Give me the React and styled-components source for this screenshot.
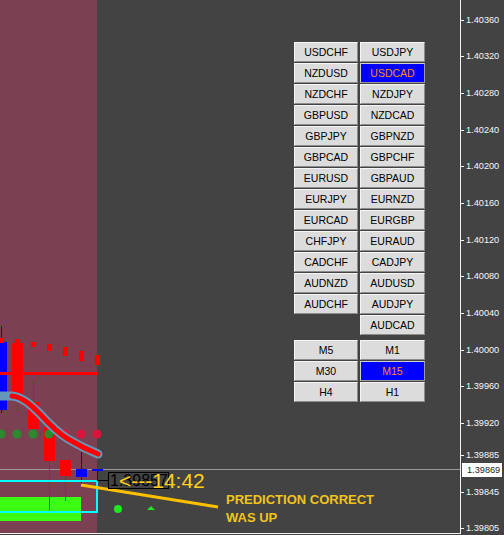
import styled, { createGlobalStyle } from "styled-components";

const GlobalStyle = createGlobalStyle`
  html, body {
    margin: 0;
    padding: 0;
    background: #434343;
  }
  body {
    font-family: "Liberation Sans", Arial, sans-serif;
  }
`;

const Screen = styled.div`
  display: flex;
  width: 504px;
  height: 535px;
  background: #434343;
  overflow: hidden;
`;

const Chart = styled.div`
  position: relative;
  flex-shrink: 0;
  width: 460px;
  height: 533px;
  border-right: 1px solid #f2f2f2;
  border-bottom: 1px solid #f2f2f2;
`;

const Canvas = styled.svg`
  display: block;
`;

const Axis = styled.div`
  position: relative;
  flex: 1;
  height: 533px;
`;

const AxisLabel = styled.div`
  position: absolute;
  left: 0;
  height: 12px;
  line-height: 12px;
  padding-left: 5px;
  font-size: 9.2px;
  color: #f6f6fa;
  white-space: nowrap;

  &::before {
    content: "";
    position: absolute;
    left: 0;
    top: 6px;
    width: 3px;
    height: 1px;
    background: #f0f0f0;
  }
`;

const PriceTag = styled.div`
  position: absolute;
  left: 1px;
  width: 40px;
  height: 14px;
  line-height: 14px;
  padding-left: 5px;
  box-sizing: border-box;
  background: #ffffff;
  color: #1c1c1c;
  font-size: 9.2px;
`;

const Panel = styled.div`
  position: absolute;
  left: 294px;
  top: 42px;
  display: flex;
  flex-direction: column;
  gap: 5px;
`;

const ButtonGrid = styled.div`
  display: grid;
  grid-template-columns: 64px 65px;
  grid-auto-rows: 20px;
  column-gap: 2px;
  row-gap: 1px;
`;

const PanelButton = styled.button`
  grid-column: ${(p) => p.$col || "auto"};
  margin: 0;
  padding: 0;
  border: 1px solid;
  border-color: ${(p) =>
    p.$active ? "#d0d0d0 #9a9a9a #9a9a9a #d0d0d0" : "#f6f6f6 #8c8c8c #8c8c8c #f6f6f6"};
  background: ${(p) => (p.$active ? "#0000ff" : "#dcdcdc")};
  color: ${(p) => (p.$active ? "#ff8c00" : "#000000")};
  font-family: "Liberation Sans", Arial, sans-serif;
  font-size: 10.5px;
  line-height: 18px;
  text-align: center;
  cursor: pointer;
`;

const BoxLabel = styled.div`
  position: absolute;
  left: 108px;
  top: 472px;
  width: 61px;
  height: 17px;
  box-sizing: border-box;
  border: 1px solid #000000;
  padding-left: 1px;
  font-size: 16px;
  line-height: 15px;
  color: #000000;
  white-space: nowrap;
  overflow: hidden;
`;

const Timer = styled.div`
  position: absolute;
  left: 119px;
  top: 469px;
  font-size: 21px;
  line-height: 24px;
  color: #ffd21a;
  white-space: nowrap;
`;

const Note = styled.div`
  position: absolute;
  left: 226px;
  top: 491px;
  font-size: 13px;
  font-weight: 700;
  line-height: 18px;
  color: #f2c31c;
  white-space: nowrap;
`;

const pairs = [
  "USDCHF", "USDJPY",
  "NZDUSD", "USDCAD",
  "NZDCHF", "NZDJPY",
  "GBPUSD", "NZDCAD",
  "GBPJPY", "GBPNZD",
  "GBPCAD", "GBPCHF",
  "EURUSD", "GBPAUD",
  "EURJPY", "EURNZD",
  "EURCAD", "EURGBP",
  "CHFJPY", "EURAUD",
  "CADCHF", "CADJPY",
  "AUDNZD", "AUDUSD",
  "AUDCHF", "AUDJPY",
];

const frames = ["M5", "M1", "M30", "M15", "H4", "H1"];

const levels = [
  "1.40360", "1.40320", "1.40280", "1.40240", "1.40200",
  "1.40160", "1.40120", "1.40080", "1.40040", "1.40000",
  "1.39960", "1.39920", "1.39885", "1.39845", "1.39805",
];

const TOP_PRICE = 1.4036;
const priceY = (p) => 19.5 + (TOP_PRICE - p) * 91700;

const candles = [
  { x: -4, w: 11, top: 342, bottom: 410, hi: 326, lo: 413, wick: 1.5, c: "#0000ff" },
  { x: 12, w: 11, top: 343, bottom: 397, hi: 339, lo: 413, wick: 17.5, c: "#ff0000" },
  { x: 28, w: 11, top: 402, bottom: 429, hi: 379, lo: 429, wick: 33.5, c: "#ff0000" },
  { x: 44, w: 11, top: 427, bottom: 461, hi: 427, lo: 510, wick: 49.5, c: "#ff0000" },
  { x: 60, w: 11, top: 460, bottom: 476, hi: 460, lo: 501, wick: 65.5, c: "#ff0000" },
  { x: 76, w: 11, top: 469, bottom: 477, hi: 452, lo: 485, wick: 81.5, c: "#0000ff" },
  { x: 92, w: 11, top: 469, bottom: 471, hi: 469, lo: 480, wick: 97.5, c: "#0000ff" },
];

const dashes = [
  [0, 338, 4, 5], [15, 339, 5, 4], [31, 342, 5, 5], [47, 344, 5, 7],
  [63, 347, 5, 9], [79, 351, 5, 10], [95, 355, 5, 10],
];

const dots = [
  [1, "#2b8a2b"], [17, "#2b8a2b"], [33, "#2b8a2b"], [49, "#2b8a2b"],
  [65, "#dc143c"], [81, "#dc143c"], [97, "#dc143c"],
];

const maPath = "M-2 396 L12 396 C22 397 30 404 40 414 C50 425 58 433 68 439 C78 445 88 450 98 454";
const maRed = "M12 396 C22 397 30 404 40 414 C50 425 58 433 68 439 C78 445 88 450 98 454";

function ChartDrawing() {
  return (
    <Canvas width="460" height="533" viewBox="0 0 460 533">
      <rect x="0" y="0" width="97" height="533" fill="#7b4152" />
      <rect x="0" y="497" width="81" height="24" fill="#3cfc14" />
      <line x1="0" y1="469.5" x2="460" y2="469.5" stroke="#9a9a9a" strokeWidth="1" />

      {candles.map((k, i) => (
        <g key={i}>
          <rect x={k.wick - 0.5} y={k.hi} width="1" height={k.lo - k.hi} fill={k.c} />
          <rect x={k.x} y={k.top} width={k.w} height={k.bottom - k.top} fill={k.c} />
        </g>
      ))}

      {dashes.map(([x, y, w, h], i) => (
        <rect key={i} x={x} y={y} width={w} height={h} fill="#ff0000" />
      ))}
      <rect x="0" y="372" width="98" height="3" fill="#ff0000" />

      <rect x="-2" y="481" width="99" height="31" fill="none" stroke="#00ffff" strokeWidth="2" />

      {dots.map(([x, c], i) => (
        <circle key={i} cx={x} cy="434" r="4.5" fill={c} />
      ))}

      <path d={maPath} fill="none" stroke="#6597b8" strokeWidth="9" strokeLinecap="round" strokeLinejoin="round" />
      <path d={maRed} fill="none" stroke="#ff0000" strokeWidth="5" strokeLinecap="round" strokeLinejoin="round" />

      <line x1="81" y1="485" x2="218" y2="507" stroke="#ffc000" strokeWidth="3" />
      <line x1="97" y1="480.5" x2="108" y2="480.5" stroke="#000000" strokeWidth="1" />

      <circle cx="118" cy="509" r="4" fill="#1ee81e" />
      <polygon points="147,510 155,510 151,506" fill="#1ee81e" />
    </Canvas>
  );
}

export default function App() {
  return (
    <>
      <GlobalStyle />
      <Screen>
        <Chart>
          <ChartDrawing />

          <Panel>
            <ButtonGrid>
              {pairs.map((p) => (
                <PanelButton key={p} $active={p === "USDCAD"}>
                  {p}
                </PanelButton>
              ))}
              <PanelButton $col={2}>AUDCAD</PanelButton>
            </ButtonGrid>
            <ButtonGrid>
              {frames.map((f) => (
                <PanelButton key={f} $active={f === "M15"}>
                  {f}
                </PanelButton>
              ))}
            </ButtonGrid>
          </Panel>

          <BoxLabel>1.39857</BoxLabel>
          <Timer>&lt;---14:42</Timer>
          <Note>
            PREDICTION CORRECT
            <br />
            WAS UP
          </Note>
        </Chart>

        <Axis>
          {levels.map((l) => (
            <AxisLabel key={l} style={{ top: priceY(parseFloat(l)) - 6 }}>
              {l}
            </AxisLabel>
          ))}
          <PriceTag style={{ top: Math.round(priceY(1.39869)) - 7 }}>1.39869</PriceTag>
        </Axis>
      </Screen>
    </>
  );
}
